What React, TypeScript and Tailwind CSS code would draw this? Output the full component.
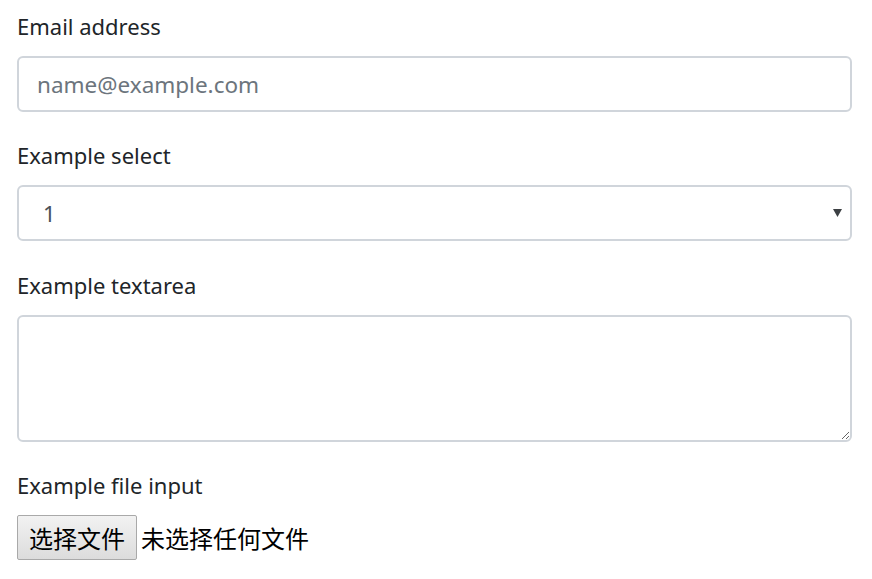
import React from "react";

const font = { fontFamily: '"Noto Sans", "Open Sans", sans-serif' };

export default function App() {
  return (
    <div
      className="bg-white pt-2 pl-[17px] pr-[20px] text-[22px] leading-[36px] text-[#212529]"
      style={font}
    >
      <div className="mb-[25px]">
        <label className="mb-3 block">Email address</label>
        <input
          type="email"
          placeholder="name@example.com"
          className="block h-[56px] w-full rounded-[6px] border-2 border-[#d0d5db] bg-white px-[18px] text-[22.5px] text-[#495057] outline-none placeholder:text-[#6c757d]"
        />
      </div>
      <div className="mb-[26px]">
        <label className="mb-3 block">Example select</label>
        <div className="relative flex h-[56px] w-full items-center rounded-[6px] border-2 border-[#d0d5db] bg-white pl-[24px] text-[#495057]">
          <span>1</span>
          <svg
            className="absolute right-[8px] top-[22px]"
            width="9"
            height="8"
            viewBox="0 0 9 8"
          >
            <path d="M0 0 H9 L4.5 8 Z" fill="#3c4043" />
          </svg>
        </div>
      </div>
      <div className="mb-[25px]">
        <label className="mb-3 block">Example textarea</label>
        <textarea
          rows={3}
          className="block h-[127px] w-full rounded-[6px] border-2 border-[#d0d5db] bg-white px-[18px] py-[9px] text-[22px] text-[#495057] outline-none"
        />
      </div>
      <div>
        <label className="mb-3 block">Example file input</label>
        <div
          className="flex items-center text-[24px] leading-none text-black"
          style={{ fontFamily: '"Noto Sans CJK SC", sans-serif' }}
        >
          <span className="flex h-[45px] w-[120px] items-center justify-center rounded-[2px] border border-[#a9a9a9] bg-gradient-to-b from-[#f2f2f2] to-[#dcdcdc]">
            选择文件
          </span>
          <span className="ml-[4px]">未选择任何文件</span>
        </div>
      </div>
    </div>
  );
}
